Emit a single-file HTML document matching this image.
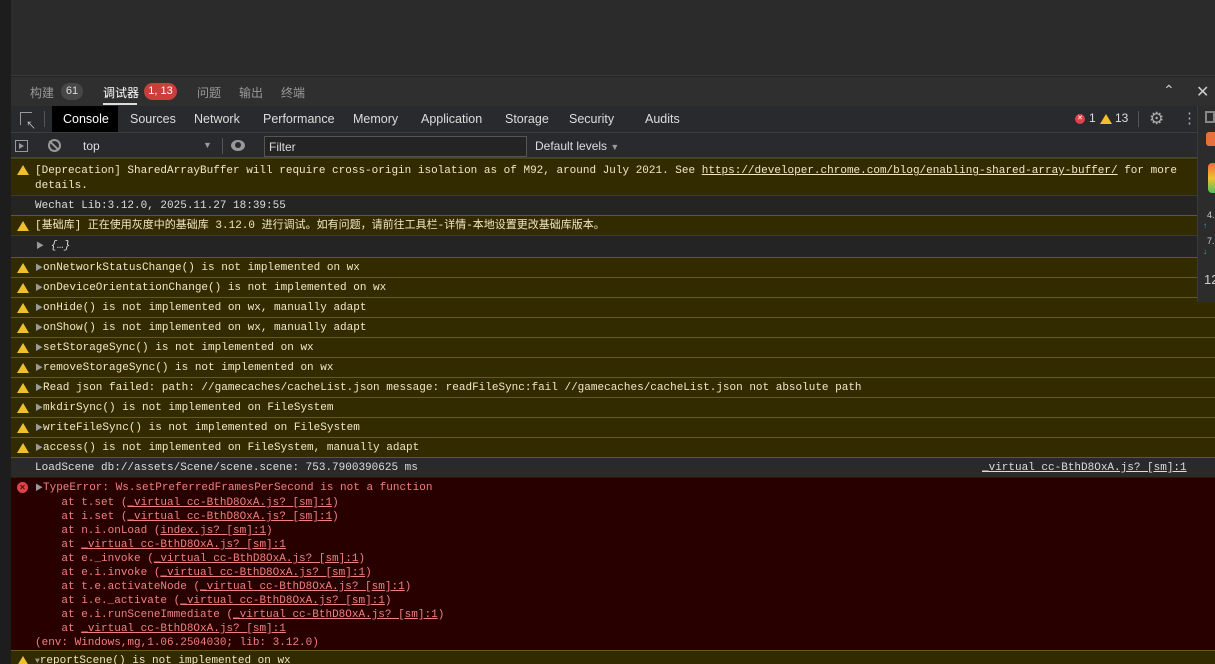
<!DOCTYPE html>
<html style="overflow:hidden;height:664px"><head><meta charset="utf-8"><style>
*{margin:0;padding:0;box-sizing:border-box}
body{width:1215px;height:664px;overflow:hidden;background:#242424;font-family:"Liberation Sans","Noto Sans CJK SC",sans-serif;position:relative;color:#ddd}
.abs{position:absolute}
.mono{font-family:"Liberation Mono","Noto Sans CJK SC",monospace;font-size:11px}
.row{position:absolute;left:11px;right:0;height:20px;line-height:20px;white-space:pre;overflow:hidden}
.warn{background:#332b00;border-top:1px solid #655a17;color:#f0e6c8}
.info{background:#242424;border-top:1px solid #3a3a3a;color:#ddd}
.ic{position:absolute;left:6px;top:5px;width:0;height:0;border-left:6px solid transparent;border-right:6px solid transparent;border-bottom:10px solid #f0c02c}
.tri{color:#999;font-size:8px}
u{text-decoration:underline}
.tab{position:absolute;top:0;height:26px;line-height:26px;font-size:12.5px;color:#ddd}
</style></head><body>
<div class="abs" style="left:0;top:0;width:11px;height:664px;background:#1d1d1d"></div>
<div class="abs" style="left:11px;top:0;width:1204px;height:76px;background:#2b2b2b;border-bottom:1px solid #3a3a3a"></div>
<div class="abs" style="left:11px;top:77px;width:1204px;height:29px;background:#2f2f2f"></div>
<div class="abs" style="left:30px;top:84px;font-size:12px;color:#999">构建</div>
<div class="abs" style="left:61px;top:83px;width:22px;height:17px;border-radius:9px;background:#474747;color:#ddd;font-size:11px;text-align:center;line-height:17px">61</div>
<div class="abs" style="left:103px;top:84px;font-size:12px;color:#fff">调试器</div>
<div class="abs" style="left:103px;top:103px;width:34px;height:2px;background:#ddd"></div>
<div class="abs" style="left:144px;top:83px;width:33px;height:17px;border-radius:9px;background:#c9403a;color:#fff;font-size:11px;text-align:center;line-height:17px">1, 13</div>
<div class="abs" style="left:197px;top:84px;font-size:12px;color:#999">问题</div>
<div class="abs" style="left:239px;top:84px;font-size:12px;color:#999">输出</div>
<div class="abs" style="left:281px;top:84px;font-size:12px;color:#999">终端</div>
<div class="abs" style="left:1163px;top:82px;font-size:14px;color:#ccc">&#8963;</div>
<div class="abs" style="left:1196px;top:82px;font-size:16px;color:#ccc">✕</div>
<div class="abs" style="left:11px;top:106px;width:1204px;height:27px;background:#292a2d;border-bottom:1px solid #3d3d3d"></div>
<div class="abs" style="left:20px;top:112px;width:12px;height:13px;border:1.5px solid #999;border-right:none;border-bottom:none"></div>
<div class="abs" style="left:26px;top:117px;font-size:10px;color:#ccc">↖</div>
<div class="abs" style="left:44px;top:111px;width:1px;height:16px;background:#555"></div>
<div class="abs" style="left:52px;top:106px;width:66px;height:26px;background:#000"></div>
<div style="position:absolute;left:0;top:106px">
<div class="tab" style="left:63px;color:#fff">Console</div>
<div class="tab" style="left:130px">Sources</div>
<div class="tab" style="left:194px">Network</div>
<div class="tab" style="left:263px">Performance</div>
<div class="tab" style="left:353px">Memory</div>
<div class="tab" style="left:421px">Application</div>
<div class="tab" style="left:505px">Storage</div>
<div class="tab" style="left:569px">Security</div>
<div class="tab" style="left:645px">Audits</div>
</div>
<div class="abs" style="left:1075px;top:114px;width:10px;height:10px;border-radius:50%;background:#e0414a;color:#fff;font-size:7px;text-align:center;line-height:10px">✕</div>
<div class="abs" style="left:1089px;top:111px;font-size:12px;color:#ddd">1</div>
<div class="abs" style="left:1100px;top:114px;width:0;height:0;border-left:6px solid transparent;border-right:6px solid transparent;border-bottom:10px solid #f0c02c"></div>
<div class="abs" style="left:1115px;top:111px;font-size:12px;color:#ddd">13</div>
<div class="abs" style="left:1138px;top:111px;width:1px;height:16px;background:#555"></div>
<div class="abs" style="left:1149px;top:109px;font-size:17px;color:#aaa">⚙</div>
<div class="abs" style="left:1182px;top:109px;font-size:15px;color:#aaa">⋮</div>
<div class="abs" style="left:11px;top:133px;width:1204px;height:26px;background:#292a2d;border-bottom:2px solid #4a4520"></div>
<div class="abs" style="left:15px;top:140px;width:13px;height:12px;border:1px solid #999"></div>
<div class="abs" style="left:19px;top:143px;width:0;height:0;border-top:3px solid transparent;border-bottom:3px solid transparent;border-left:5px solid #999"></div>
<div class="abs" style="left:48px;top:139px;width:13px;height:13px;border:2px solid #999;border-radius:50%"></div>
<div class="abs" style="left:53px;top:139px;width:2px;height:13px;background:#999;transform:rotate(-45deg)"></div>
<div class="abs" style="left:83px;top:139px;font-size:12px;color:#ddd">top</div>
<div class="abs" style="left:203px;top:140px;font-size:9px;color:#999">▼</div>
<div class="abs" style="left:222px;top:138px;width:1px;height:16px;background:#555"></div>
<div class="abs" style="left:231px;top:140px;width:14px;height:11px;border-radius:50%;background:#999"></div>
<div class="abs" style="left:235px;top:142px;width:6px;height:6px;border-radius:50%;background:#292a2d"></div>
<div class="abs" style="left:264px;top:136px;width:263px;height:21px;border:1px solid #555;background:#242424;font-size:12px;color:#ddd;padding:3px 4px">Filter</div>
<div class="abs" style="left:535px;top:139px;font-size:12px;color:#ddd">Default levels <span style="font-size:9px;color:#999">▼</span></div>
<div class="mono">
<div class="row warn" style="top:160px;height:35px;line-height:15px;padding:4px 0 0 24px;border-top:none"><div class="ic" style="top:5px"></div>[Deprecation] SharedArrayBuffer will require cross-origin isolation as of M92, around July 2021. See <u>https://developer.chrome.com/blog/enabling-shared-array-buffer/</u> for more
details.</div>
<div class="row info" style="top:195px;padding-left:24px">Wechat Lib:3.12.0, 2025.11.27 18:39:55</div>
<div class="row warn" style="top:215px;padding-left:24px"><div class="ic"></div>[基础库] 正在使用灰度中的基础库 3.12.0 进行调试。如有问题，请前往工具栏-详情-本地设置更改基础库版本。</div>
<div class="row info" style="top:235px;padding-left:25px"><span class="tri">▶</span> <i>{…}</i></div>
<div class="row warn" style="top:257px;padding-left:24px"><div class="ic"></div><span class="tri">▶</span>onNetworkStatusChange() is not implemented on wx</div>
<div class="row warn" style="top:277px;padding-left:24px"><div class="ic"></div><span class="tri">▶</span>onDeviceOrientationChange() is not implemented on wx</div>
<div class="row warn" style="top:297px;padding-left:24px"><div class="ic"></div><span class="tri">▶</span>onHide() is not implemented on wx, manually adapt</div>
<div class="row warn" style="top:317px;padding-left:24px"><div class="ic"></div><span class="tri">▶</span>onShow() is not implemented on wx, manually adapt</div>
<div class="row warn" style="top:337px;padding-left:24px"><div class="ic"></div><span class="tri">▶</span>setStorageSync() is not implemented on wx</div>
<div class="row warn" style="top:357px;padding-left:24px"><div class="ic"></div><span class="tri">▶</span>removeStorageSync() is not implemented on wx</div>
<div class="row warn" style="top:377px;padding-left:24px"><div class="ic"></div><span class="tri">▶</span>Read json failed: path: //gamecaches/cacheList.json message: readFileSync:fail //gamecaches/cacheList.json not absolute path</div>
<div class="row warn" style="top:397px;padding-left:24px"><div class="ic"></div><span class="tri">▶</span>mkdirSync() is not implemented on FileSystem</div>
<div class="row warn" style="top:417px;padding-left:24px"><div class="ic"></div><span class="tri">▶</span>writeFileSync() is not implemented on FileSystem</div>
<div class="row warn" style="top:437px;padding-left:24px"><div class="ic"></div><span class="tri">▶</span>access() is not implemented on FileSystem, manually adapt</div>
<div class="row info" style="top:457px;padding-left:24px;background:#2a2a2a;border-top:1px solid #655a17">LoadScene db://assets/Scene/scene.scene: 753.7900390625 ms<span style="position:absolute;left:971px"><u>_virtual cc-BthD8OxA.js? [sm]:1</u></span></div>
<div class="row" style="top:477px;height:173px;line-height:14px;padding:3px 0 0 24px;background:#280000;border-top:1px solid #5c0000;color:#f08080"><div style="position:absolute;left:6px;top:4px;width:11px;height:11px;border-radius:50%;background:#e0414a;color:#280000;font-size:8px;line-height:11px;text-align:center;font-family:'Liberation Sans'">✕</div><span class="tri">▶</span>TypeError: Ws.setPreferredFramesPerSecond is not a function
    at t.set (<u>_virtual cc-BthD8OxA.js? [sm]:1</u>)
    at i.set (<u>_virtual cc-BthD8OxA.js? [sm]:1</u>)
    at n.i.onLoad (<u>index.js? [sm]:1</u>)
    at <u>_virtual cc-BthD8OxA.js? [sm]:1</u>
    at e._invoke (<u>_virtual cc-BthD8OxA.js? [sm]:1</u>)
    at e.i.invoke (<u>_virtual cc-BthD8OxA.js? [sm]:1</u>)
    at t.e.activateNode (<u>_virtual cc-BthD8OxA.js? [sm]:1</u>)
    at i.e._activate (<u>_virtual cc-BthD8OxA.js? [sm]:1</u>)
    at e.i.runSceneImmediate (<u>_virtual cc-BthD8OxA.js? [sm]:1</u>)
    at <u>_virtual cc-BthD8OxA.js? [sm]:1</u>
(env: Windows,mg,1.06.2504030; lib: 3.12.0)</div>
<div class="row warn" style="top:650px;height:14px;padding-left:24px"><div class="ic"></div><span class="tri">▼</span>reportScene() is not implemented on wx</div>
</div>
<div class="abs" style="left:1197px;top:106px;width:18px;height:196px;background:#2c2c2c;border-left:1px solid #3a3a3a"></div>
<div class="abs" style="left:1205px;top:111px;width:10px;height:12px;border:2px solid #888"></div>
<div class="abs" style="left:1206px;top:132px;width:9px;height:14px;background:#e8703a;border-radius:3px 0 0 3px"></div>
<div class="abs" style="left:1208px;top:163px;width:7px;height:30px;border-radius:4px 0 0 4px;background:linear-gradient(#f06a3a,#f0c030,#50c060)"></div>
<div class="abs" style="left:1207px;top:210px;font-size:9px;color:#ccc">4.</div>
<div class="abs" style="left:1203px;top:221px;font-size:8px;color:#3aa0e0">↑</div>
<div class="abs" style="left:1207px;top:236px;font-size:9px;color:#ccc">7.</div>
<div class="abs" style="left:1203px;top:247px;font-size:8px;color:#40c060">↓</div>
<div class="abs" style="left:1204px;top:272px;font-size:13px;color:#ccc">12</div>
</body></html>
